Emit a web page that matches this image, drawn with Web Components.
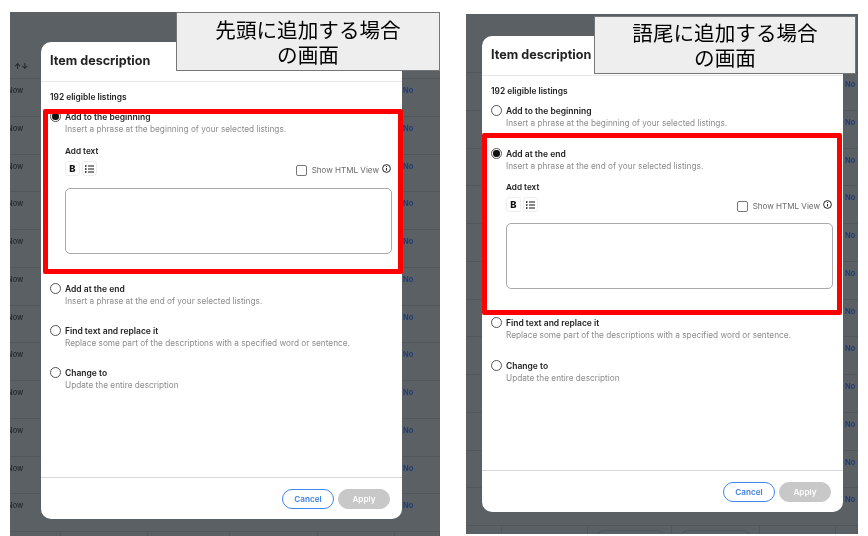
<!doctype html>
<html lang="ja">
	<head>
		<meta charset="UTF-8" />
		<title>Item description</title>
		<style>
			html,
			body {
				margin: 0;
				height: 536px;
				overflow: hidden;
				background: #fff;
			}

			body {
				display: flex;
				align-items: flex-start;
				gap: 26px;
				padding-left: 10px;
				font-family: Inter, 'Noto Sans', sans-serif;
			}
		</style>

		<script>
			class ListingBackdrop extends HTMLElement {
				#shadow = this.attachShadow({ mode: 'open' });

				connectedCallback() {
					const cols = this.getAttribute('cols');
					const head = this.getAttribute('head');
					const step = this.getAttribute('step');
					const now = this.hasAttribute('now');
					const pills = this.hasAttribute('pills');
					const sort = this.hasAttribute('sort');

					let rows = `<div class="row head">${sort ? '<span class="sort">↑↓</span>' : ''}</div>`;
					for (let i = 0; i < 12; i++) {
						rows += `<div class="row">
							<span class="now">${now ? 'Now' : ''}</span><i></i><i></i><i></i><i></i>
							<span class="no">No</span>
						</div>`;
					}
					rows += `<div class="row last">
						<i></i><i></i><i>${pills ? '<b class="pill left"></b>' : ''}</i><i>${pills ? '<b class="pill"></b>' : ''}</i><i></i><i></i>
					</div>`;

					this.#shadow.innerHTML = `
						<style>
							:host {
								display: block;
								height: 100%;
								overflow: hidden;
								background: #5a6064;
								font: 700 7.5px/11px Inter, sans-serif;
							}

							.row {
								display: grid;
								grid-template-columns: ${cols};
								height: ${step};
								box-sizing: border-box;
								border-bottom: 1px solid #51575b;
							}

							.head {
								height: ${head};
							}

							.last {
								border-bottom: 0;
							}

							.last i {
								border-right: 1px solid #51575b;
							}

							.sort {
								margin: 49px 0 0 4px;
								color: #1d2023;
								font-size: 8px;
							}

							.now {
								margin: 6px 0 0 -3px;
								color: #25292c;
								font-weight: 500;
								white-space: nowrap;
							}

							.no {
								padding: 6px 0 0 ${this.getAttribute('nopad')};
								color: #1c3a78;
								font-weight: 600;
							}

							.pill {
								display: block;
								height: 20px;
								margin: 4px 8px 0 8px;
								border: 1px solid #4f5559;
								border-radius: 8px;
							}

							.pill.left {
								margin-right: 6px;
							}
						</style>
						${rows}
					`;
				}
			}

			class RadioOption extends HTMLElement {
				#shadow = this.attachShadow({ mode: 'open' });

				connectedCallback() {
					const checked = this.hasAttribute('checked');

					this.#shadow.innerHTML = `
						<style>
							:host {
								display: grid;
								grid-template-columns: 15px 1fr;
								font-family: Inter, sans-serif;
							}

							.radio {
								display: flex;
								align-items: center;
								justify-content: center;
								box-sizing: border-box;
								width: 11px;
								height: 11px;
								border: 1px solid #555;
								border-radius: 50%;
							}

							.radio span {
								width: 6.5px;
								height: 6.5px;
								border-radius: 50%;
								background: #111;
							}

							.label {
								color: #222;
								font-size: 8.5px;
								font-weight: 600;
								line-height: 12px;
							}

							.desc {
								color: #8c8c8c;
								font-size: 8.25px;
								line-height: 12px;
								white-space: nowrap;
							}

							.more {
								grid-column: 2;
							}
						</style>
						<span class="radio">${checked ? '<span></span>' : ''}</span>
						<div>
							<div class="label">${this.getAttribute('label')}</div>
							<div class="desc">${this.getAttribute('desc')}</div>
						</div>
						<div class="more"><slot></slot></div>
					`;
				}
			}

			class TextEditor extends HTMLElement {
				#shadow = this.attachShadow({ mode: 'open' });

				connectedCallback() {
					this.#shadow.innerHTML = `
						<style>
							:host {
								display: block;
								padding: var(--editor-top, 10px) 1px var(--editor-bottom, 10.25px) 0;
								font-family: Inter, sans-serif;
							}

							.title {
								color: #222;
								font-size: 8.2px;
								font-weight: 600;
								line-height: 12px;
							}

							.toolbar {
								display: flex;
								align-items: center;
								gap: 2px;
								height: 14px;
								margin-top: 4.5px;
							}

							.tool {
								display: flex;
								align-items: center;
								justify-content: center;
								box-sizing: border-box;
								width: 15px;
								height: 15px;
								border: 1px solid #eee;
								border-radius: 3px;
								color: #111;
								font-size: 9.5px;
								font-weight: 800;
							}

							.html {
								display: flex;
								align-items: center;
								margin: 3px 1px 0 auto;
								color: #6a6a6a;
								font-size: 8.05px;
							}

							.check {
								box-sizing: border-box;
								width: 11px;
								height: 11px;
								margin-right: 5px;
								border: 1px solid #777;
								border-radius: 2px;
							}

							.html svg {
								margin-left: 3px;
								margin-top: -3px;
							}

							.box {
								box-sizing: border-box;
								height: 66px;
								margin-top: var(--box-gap, 12.5px);
								border: 1px solid #aaa;
								border-radius: 5px;
							}
						</style>
						<div class="title">Add text</div>
						<div class="toolbar">
							<span class="tool">B</span>
							<span class="tool">
								<svg width="9" height="8" viewBox="0 0 9 8" fill="none" stroke="#111">
									<path d="M3 1h6M3 4h6M3 7h6" stroke-width="1" />
									<path d="M0 1h1.5M0 4h1.5M0 7h1.5" stroke-width="1.4" />
								</svg>
							</span>
							<span class="html">
								<span class="check"></span>
								Show HTML View
								<svg width="9" height="9" viewBox="0 0 9 9" fill="none" stroke="#222">
									<circle cx="4.5" cy="4.5" r="3.9" />
									<path d="M4.5 4v2.6M4.5 2v1" />
								</svg>
							</span>
						</div>
						<div class="box"></div>
					`;
				}
			}

			class ItemModal extends HTMLElement {
				#shadow = this.attachShadow({ mode: 'open' });

				connectedCallback() {
					this.#shadow.innerHTML = `
						<style>
							:host {
								position: absolute;
								display: flex;
								flex-direction: column;
								box-sizing: border-box;
								background: #fff;
								border-radius: 10px;
								font-family: Inter, sans-serif;
							}

							header {
								box-sizing: border-box;
								height: 40px;
								padding: 10px 9px 0;
								border-bottom: 1px solid #e6e6e6;
								color: #222;
								font-size: 12.6px;
								font-weight: 700;
								line-height: 18px;
							}

							.body {
								flex: 1;
								padding: 10px 9px 0;
							}

							.count {
								margin-bottom: 8px;
								color: #222;
								font-size: 8.4px;
								font-weight: 600;
								line-height: 11px;
							}

							.options {
								display: flex;
								flex-direction: column;
								gap: var(--option-gap, 18.25px);
							}

							footer {
								display: flex;
								justify-content: flex-end;
								gap: 4px;
								padding: 11px 12px 10px;
								border-top: 1px solid #d9d9d9;
							}

							button {
								box-sizing: border-box;
								width: 52px;
								height: 20px;
								padding: 0;
								border: 1px solid #3f86f0;
								border-radius: 10px;
								background: #fff;
								color: #3f7fe0;
								font: 600 8.2px Inter, sans-serif;
							}

							button.apply {
								border-color: #c8c8c8;
								background: #c8c8c8;
								color: #fff;
							}
						</style>
						<header>Item description</header>
						<div class="body">
							<div class="count">192 eligible listings</div>
							<div class="options"><slot></slot></div>
						</div>
						<footer>
							<button>Cancel</button>
							<button class="apply">Apply</button>
						</footer>
					`;
				}
			}

			class CalloutNote extends HTMLElement {
				#shadow = this.attachShadow({ mode: 'open' });

				connectedCallback() {
					this.#shadow.innerHTML = `
						<style>
							:host {
								position: absolute;
								display: flex;
								align-items: center;
								justify-content: center;
								box-sizing: border-box;
								border: 1px solid #767676;
								background: #eeeeee;
								color: #000;
								font: 400 20.6px/25px 'Noto Sans CJK JP', sans-serif;
								text-align: center;
							}
						</style>
						<div><slot></slot></div>
					`;
				}
			}

			class RedFrame extends HTMLElement {
				#shadow = this.attachShadow({ mode: 'open' });

				connectedCallback() {
					this.#shadow.innerHTML = `
						<style>
							:host {
								position: absolute;
								box-sizing: border-box;
								border: 5px solid #ff0000;
								border-radius: 2px;
							}
						</style>
					`;
				}
			}

			class ScreenShot extends HTMLElement {
				#shadow = this.attachShadow({ mode: 'open' });

				connectedCallback() {
					this.#shadow.innerHTML = `
						<style>
							:host {
								position: relative;
								display: block;
								flex: none;
								overflow: hidden;
								filter: blur(0.35px);
							}
						</style>
						<slot></slot>
					`;
				}
			}

			customElements.define('listing-backdrop', ListingBackdrop);
			customElements.define('radio-option', RadioOption);
			customElements.define('text-editor', TextEditor);
			customElements.define('item-modal', ItemModal);
			customElements.define('callout-note', CalloutNote);
			customElements.define('red-frame', RedFrame);
			customElements.define('screen-shot', ScreenShot);
		</script>
	</head>

	<body>
		<screen-shot style="width: 430px; height: 524px; margin-top: 12px">
			<listing-backdrop
				cols="51px 87px 82px 88px 77px 45px"
				head="67px"
				step="37.75px"
				nopad="8px"
				now
				sort
			></listing-backdrop>
			<item-modal style="left: 31px; top: 30px; width: 361px; height: 477px">
				<radio-option
					checked
					label="Add to the beginning"
					desc="Insert a phrase at the beginning of your selected listings."
				>
					<text-editor></text-editor>
				</radio-option>
				<radio-option
					label="Add at the end"
					desc="Insert a phrase at the end of your selected listings."
				></radio-option>
				<radio-option
					label="Find text and replace it"
					desc="Replace some part of the descriptions with a specified word or sentence."
				></radio-option>
				<radio-option label="Change to" desc="Update the entire description"></radio-option>
			</item-modal>
			<red-frame style="left: 33px; top: 97px; width: 360px; height: 165px"></red-frame>
			<callout-note style="left: 166px; top: 0; width: 264px; height: 59px">
				先頭に追加する場合<br />の画面
			</callout-note>
		</screen-shot>

		<screen-shot style="width: 392px; height: 520px; margin-top: 14px">
			<listing-backdrop
				cols="36px 86px 84px 88px 76px 22px"
				head="59px"
				step="37.75px"
				nopad="9px"
				pills
			></listing-backdrop>
			<item-modal style="left: 16px; top: 22px; width: 361px; height: 476px; --option-gap: 19px">
				<radio-option
					label="Add to the beginning"
					desc="Insert a phrase at the beginning of your selected listings."
				></radio-option>
				<radio-option
					checked
					label="Add at the end"
					desc="Insert a phrase at the end of your selected listings."
				>
					<text-editor style="--editor-top: 9px; --box-gap: 11.5px; --editor-bottom: 9px"></text-editor>
				</radio-option>
				<radio-option
					label="Find text and replace it"
					desc="Replace some part of the descriptions with a specified word or sentence."
				></radio-option>
				<radio-option label="Change to" desc="Update the entire description"></radio-option>
			</item-modal>
			<red-frame style="left: 16px; top: 119px; width: 360px; height: 182px"></red-frame>
			<callout-note style="left: 128px; top: 2px; width: 262px; height: 58px">
				語尾に追加する場合<br />の画面
			</callout-note>
		</screen-shot>
	</body>
</html>
